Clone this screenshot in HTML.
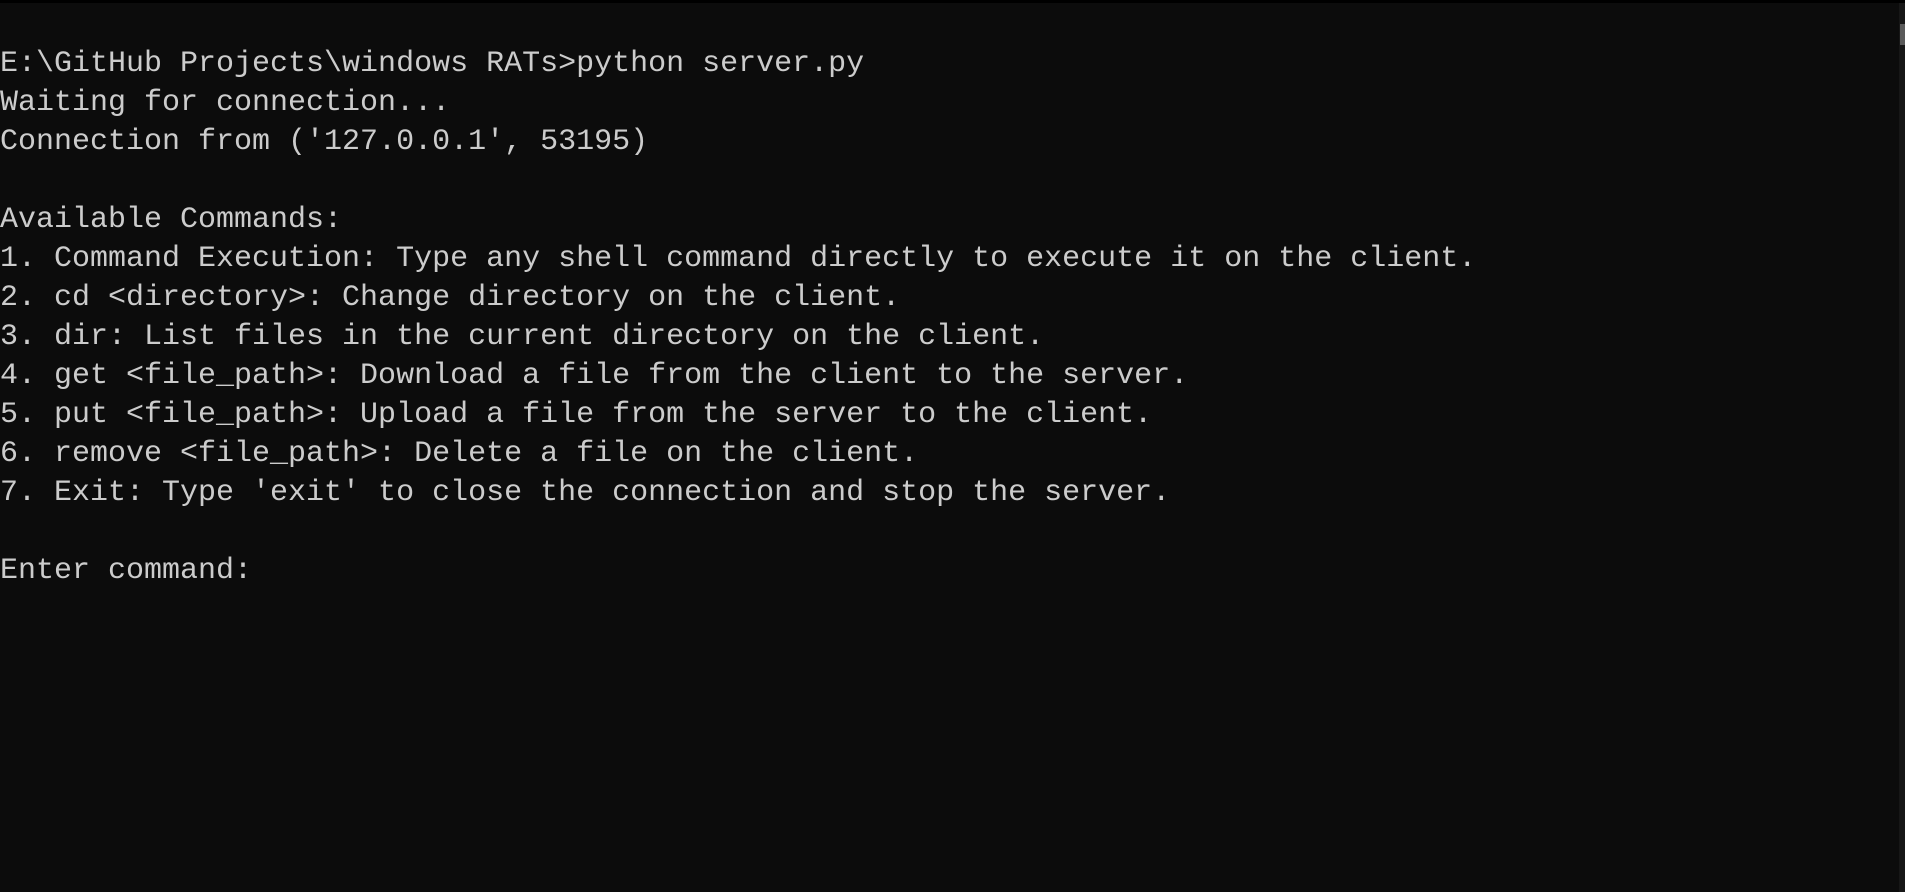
<!DOCTYPE html>
<html><head><meta charset="utf-8"><style>
html,body{margin:0;padding:0;width:1905px;height:892px;overflow:hidden;background:#0c0c0c;}
.top{position:absolute;left:0;top:0;width:1905px;height:3px;background:#000;}
.sb{position:absolute;right:0;top:3px;width:6px;height:889px;background:#171717;}
.th{position:absolute;right:0;top:24px;width:5px;height:21px;background:#5a5a5a;}
pre{position:absolute;left:0;top:45px;margin:0;font-family:"Liberation Mono",monospace;font-size:30px;line-height:39px;color:#cccccc;white-space:pre;}
</style></head><body>
<div class="top"></div><div class="sb"></div><div class="th"></div>
<pre>E:\GitHub Projects\windows RATs&gt;python server.py
Waiting for connection...
Connection from ('127.0.0.1', 53195)

Available Commands:
1. Command Execution: Type any shell command directly to execute it on the client.
2. cd &lt;directory&gt;: Change directory on the client.
3. dir: List files in the current directory on the client.
4. get &lt;file_path&gt;: Download a file from the client to the server.
5. put &lt;file_path&gt;: Upload a file from the server to the client.
6. remove &lt;file_path&gt;: Delete a file on the client.
7. Exit: Type 'exit' to close the connection and stop the server.

Enter command:</pre>
</body></html>
